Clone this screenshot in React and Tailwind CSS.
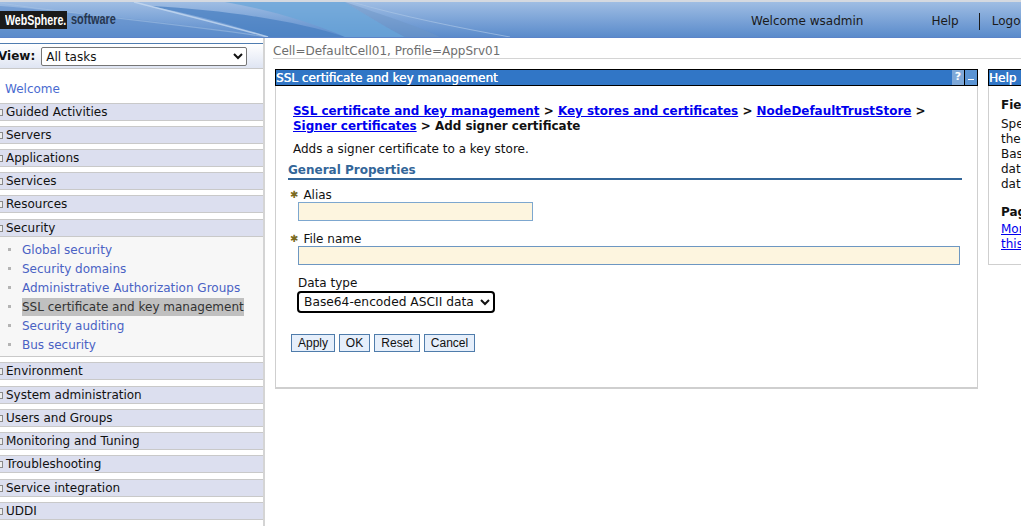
const font = { fontFamily: '"DejaVu Sans", Verdana, sans-serif' };

function Row({ label, mt = "mt-[5px]" }) {
  return (
    <div className={`${mt} flex h-[18px] items-center border-y border-[#c9c9c9] bg-[#dcdfef] text-[12px] text-[#111]`}>
      <span className="ml-[-5px] mr-[3px] h-[7px] w-[8px] border border-[#8a8a8a] bg-[#eee]" />
      <span>{label}</span>
    </div>
  );
}

function Sub({ label, active }) {
  return (
    <div className="flex h-[19px] items-center">
      <span className="ml-[8px] mr-[11px] h-[3px] w-[3px] bg-[#b4b4b4]" />
      <span className={active ? "bg-[#c0c0c0] text-[#333]" : "text-[#4a62c4]"}>{label}</span>
    </div>
  );
}

function Req({ label }) {
  return (
    <div className="flex h-[15px] items-center text-[12px] text-[#111]">
      <span className="ml-[2px] mr-[5px] text-[10px] leading-none text-[#7a6a20]">✱</span>
      {label}
    </div>
  );
}

function Btn({ label, w }) {
  return (
    <button className={`${w} h-[18px] border border-[#4f7cab] bg-[#e6effb] text-center text-[12px] leading-none text-[#111]`} style={{ fontFamily: '"Liberation Sans", Arial, sans-serif' }}>
      {label}
    </button>
  );
}

export default function App() {
  return (
    <div className="h-[526px] w-[1021px] overflow-hidden bg-white" style={font}>
      <header className="relative flex h-[38px] items-center border-t-[2px] border-b-[1px] border-t-[#d5d9e0] border-b-[#5b84c8] bg-gradient-to-b from-[#9fbde3] to-[#5a8bcb]">
        <svg className="absolute inset-0 h-full w-[600px]" viewBox="0 0 600 35" preserveAspectRatio="none">
          <path d="M0 4C70 10 170 20 268 35H0Z" fill="#5d8dca" opacity="0.55" />
          <path d="M150 4C230 8 300 20 345 35H270C230 22 190 12 150 4Z" fill="#4a80c2" opacity="0.75" />
          <path d="M225 0H345C365 12 385 25 405 35H345C310 20 270 8 225 0Z" fill="#6aa5d8" opacity="0.75" />
          <path d="M345 0C380 12 420 25 440 35H405C385 25 365 12 345 0Z" fill="#6d96c6" opacity="0.5" />
          <path d="M0 1C70 12 180 22 268 35" stroke="#a9c5e6" strokeWidth="1.2" fill="none" opacity="0.5" />
          <path d="M134 0C180 12 230 24 268 35" stroke="#c9dcf2" strokeWidth="1.5" fill="none" opacity="0.75" />
          <path d="M352 0C400 14 460 26 510 35" stroke="#a9c5e6" strokeWidth="1" fill="none" opacity="0.7" />
        </svg>
        <div className="relative h-[18px] w-[67px] shrink-0 bg-[#1a1a1a] pl-[5px] text-[14px] font-bold leading-[18px] text-white" style={{ fontFamily: '"Liberation Sans", Arial, sans-serif' }}>
          <span className="inline-block origin-left scale-x-[0.76] whitespace-nowrap">WebSphere.</span>
        </div>
        <span className="relative ml-[4px] w-[44px] shrink-0 text-[14px] font-bold text-[#26364f]" style={{ fontFamily: '"Liberation Sans", Arial, sans-serif' }}>
          <span className="inline-block origin-left scale-x-[0.78] whitespace-nowrap">software</span>
        </span>
        <span className="relative ml-[636px] shrink-0 whitespace-nowrap pt-[3px] text-[12px] text-[#1a1a1a]">Welcome wsadmin</span>
        <span className="relative ml-[68px] shrink-0 pt-[3px] text-[12px] text-[#1a1a1a]">Help</span>
        <span className="relative ml-[20px] mt-[3px] h-[17px] w-px shrink-0 bg-[#1a1a1a]" />
        <span className="relative ml-[12px] shrink-0 whitespace-nowrap pt-[3px] text-[12px] text-[#1a1a1a]">Logout</span>
      </header>

      <div className="flex h-[488px]">
        <aside className="h-full w-[265px] shrink-0 overflow-hidden border-r-[2px] border-[#d4d4d4] text-[12px]">
          <div className="mt-[5px] flex h-[26px] items-center border-t border-b border-t-[#4f7cb0] border-b-[#c9c9c9] bg-gradient-to-b from-white to-[#dfe5f3]">
            <span className="ml-[-2px] font-bold text-[#111]">View:</span>
            <select className="ml-[6px] h-[19px] w-[206px] rounded-[2px] border border-[#767676] bg-white pl-0 pt-px text-[12px] text-[#111]" style={font} defaultValue="All tasks">
              <option>All tasks</option>
            </select>
          </div>
          <div className="flex h-[34px] items-center pl-[5px] pt-[6px] text-[#4a6bd0]">Welcome</div>
          <Row label="Guided Activities" mt="mt-0" />
          <Row label="Servers" />
          <Row label="Applications" />
          <Row label="Services" />
          <Row label="Resources" />
          <Row label="Security" mt="mt-[6px]" />
          <div className="h-[120px] border-b border-[#c9c9c9] bg-[#f7f7f7] pt-[3px]">
            <Sub label="Global security" />
            <Sub label="Security domains" />
            <Sub label="Administrative Authorization Groups" />
            <Sub label="SSL certificate and key management" active />
            <Sub label="Security auditing" />
            <Sub label="Bus security" />
          </div>
          <Row label="Environment" mt="mt-[5px]" />
          <Row label="System administration" mt="mt-[6px]" />
          <Row label="Users and Groups" />
          <Row label="Monitoring and Tuning" />
          <Row label="Troubleshooting" />
          <Row label="Service integration" mt="mt-[6px]" />
          <Row label="UDDI" />
        </aside>

        <main className="min-w-0 flex-1 overflow-hidden">
          <div className="ml-[8px] mt-[6px] flex h-[15px] items-center border-b border-[#d4d4d4] pb-[1px] text-[12px] text-[#6e6e6e]">
            Cell=DefaultCell01, Profile=AppSrv01
          </div>
          <div className="ml-[10px] mt-[10px] flex items-start gap-[10px]">
            <section className="h-[320px] w-[703px] shrink-0 border-x border-b-[2px] border-x-[#cfcfcf] border-b-[#cfcfcf]">
              <div className="-mx-px flex h-[17px] items-center border border-black bg-[#3176c6] text-[12px] text-white">
                <span className="flex-1 [text-shadow:0.3px_0_0_white]">SSL certificate and key management</span>
                <span className="flex h-full w-[12px] items-center justify-center bg-[#7ea8d8] text-[11px] font-bold text-white">?</span>
                <span className="h-full w-px bg-black" />
                <span className="flex h-full w-[12px] items-center justify-center bg-[#5b94d4]">
                  <span className="mt-[3px] h-[1px] w-[6px] bg-white" />
                </span>
              </div>
              <div className="pl-[12px]">
                <div className="ml-[5px] mt-[18px] text-[11.95px] font-bold leading-[15px] text-[#111]">
                  <a href="#" className="text-[#0000ee] underline">SSL certificate and key management</a>
                  {" > "}
                  <a href="#" className="text-[#0000ee] underline">Key stores and certificates</a>
                  {" > "}
                  <a href="#" className="text-[#0000ee] underline">NodeDefaultTrustStore</a>
                  {" >"}
                  <br />
                  <a href="#" className="text-[#0000ee] underline">Signer certificates</a>
                  {" > Add signer certificate"}
                </div>
                <p className="ml-[5px] mt-[8px] text-[12px] leading-[15px] text-[#111]">Adds a signer certificate to a key store.</p>
                <div className="mt-[6px] w-[674px] border-b-[2px] border-[#336699] text-[12px] font-bold leading-[15px] text-[#336699]">General Properties</div>
                <div className="mt-[7px]"><Req label="Alias" /></div>
                <input className="ml-[10px] block h-[19px] w-[235px] border border-[#7da7cf] bg-[#fdf5df]" />
                <div className="mt-[10px]"><Req label="File name" /></div>
                <input className="ml-[10px] block h-[19px] w-[662px] border border-[#6d97c2] bg-[#fdf5df]" />
                <div className="ml-[10px] mt-[11px] h-[15px] text-[12px] leading-[15px] text-[#111]">Data type</div>
                <select className="ml-[9px] mt-0 block h-[22px] w-[198px] rounded-[4px] border-[2px] border-black bg-white pl-px text-[12.25px] text-[#111]" style={font} defaultValue="b">
                  <option value="b">Base64-encoded ASCII data</option>
                </select>
                <div className="ml-[3px] mt-[21px] flex gap-[4px]">
                  <Btn label="Apply" w="w-[44px]" />
                  <Btn label="OK" w="w-[31px]" />
                  <Btn label="Reset" w="w-[46px]" />
                  <Btn label="Cancel" w="w-[51px]" />
                </div>
              </div>
            </section>
            <section className="h-[196px] w-[120px] shrink-0 border-l border-b border-[#cfcfcf] text-[12px] text-[#111]">
              <div className="-ml-px flex h-[17px] items-center border border-black bg-[#3176c6] text-white [text-shadow:0.3px_0_0_white]">Help</div>
              <div className="pl-[12px] leading-[15px]">
                <div className="mt-[12px] font-bold">Field help</div>
                <div className="mt-[4px]">Specifies</div>
                <div>the</div>
                <div>Base64</div>
                <div>data</div>
                <div>data</div>
                <div className="mt-[13px] font-bold">Page help</div>
                <div className="mt-[2px]"><a href="#" className="text-[#0000ee] underline">More</a></div>
                <div><a href="#" className="text-[#0000ee] underline">this</a></div>
              </div>
            </section>
          </div>
        </main>
      </div>
    </div>
  );
}
